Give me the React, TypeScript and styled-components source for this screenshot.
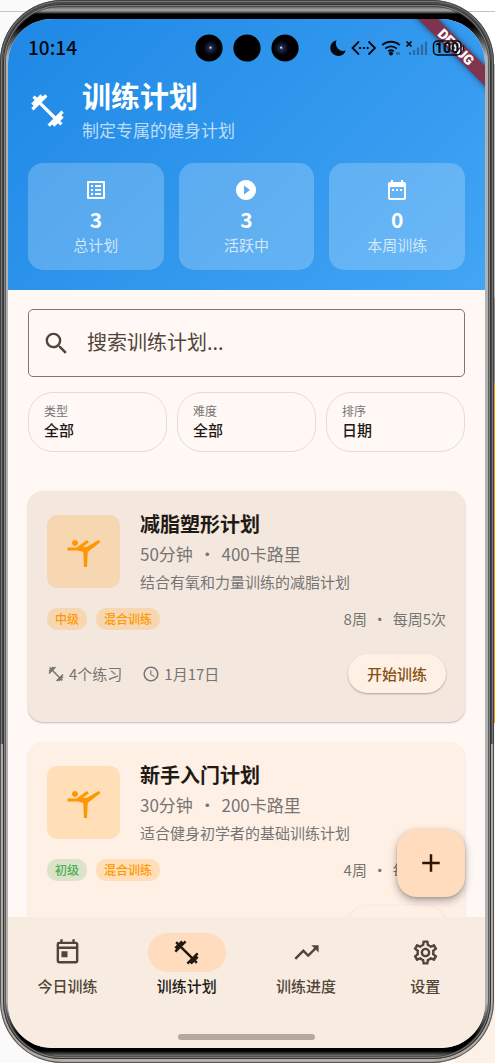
import React from 'react';
import styled, { createGlobalStyle, css } from 'styled-components';
import {
  MdAdd,
  MdDateRange,
  MdFitnessCenter,
  MdListAlt,
  MdOutlineSettings,
  MdOutlineToday,
  MdPlayCircleFilled,
  MdSchedule,
  MdSearch,
  MdSportsGymnastics,
  MdTrendingUp,
} from 'react-icons/md';

const GlobalStyle = createGlobalStyle`
  *, *::before, *::after { box-sizing: border-box; }
  body {
    margin: 0;
    font-family: "Noto Sans CJK SC", "Noto Sans", sans-serif;
    color: #211a14;
    background: #f7f6f6;
  }
  button, input, select { font: inherit; color: inherit; }
  h1, h2, p, ul { margin: 0; padding: 0; }
`;

/* ---------- device ---------- */

const Desk = styled.div`
  height: 100vh;
  min-height: 800px;
  padding-right: 1px;
  background:
    linear-gradient(#c4c4c4, #c4c4c4) 0 11px / 100% 1px no-repeat,
    linear-gradient(#fff 0 6%, #b9b9b9 6% 28%, #8d8d8d 28% 36%, #f59a0c 36% 68%, #f4f4f4 68% 94%, #fdf0e9 94%) right / 40px 100% no-repeat,
    #fbfafa;
`;

const Phone = styled.div`
  height: 100%;
  padding: 4px 3px;
  border-radius: 62px;
  background: linear-gradient(#4a4a4a 0 70%, #b7afa4 70%);
  box-shadow: inset 0 0 0 1px rgba(30, 30, 30, 0.6), inset 0 0 0 2px rgba(160, 160, 160, 0.5);
`;

const Bezel = styled.div`
  height: 100%;
  padding: 15px 6px 11px 5px;
  border-radius: 58px;
  background: linear-gradient(
    #2a2a2a 0,
    #a9a5a5 6px,
    #6a6868 8px,
    #000 10px,
    #000 22px,
    #b2b2b2 52px,
    #b2b2b2 calc(100% - 56px),
    #000 calc(100% - 24px),
    #000 calc(100% - 8px),
    #8a8a8a calc(100% - 2px),
    #55504b 100%
  );
  box-shadow: inset 0 0 0 1px #333, inset 0 0 0 2px rgba(140, 140, 140, 0.8), inset 0 0 0 3px rgba(60, 60, 60, 0.7);
`;

const Screen = styled.div`
  position: relative;
  display: flex;
  flex-direction: column;
  height: 100%;
  overflow: hidden;
  border-radius: 44px;
  background: #fff8f5;
`;

const DebugRibbon = styled.div`
  position: absolute;
  top: 21px;
  right: -31px;
  width: 120px;
  height: 14px;
  transform: rotate(45deg);
  background: rgba(142, 32, 46, 0.84);
  box-shadow: 0 0 6px rgba(0, 0, 0, 0.5);
  color: #fff;
  font: 900 14px/14px Roboto, sans-serif;
  text-align: center;
`;

/* ---------- header ---------- */

const Header = styled.header`
  flex: none;
  padding: 0 20px 20px;
  background: linear-gradient(135deg, #1e88e5, #42a5f5);
  color: #fff;
`;

const StatusBar = styled.div`
  display: grid;
  grid-template-columns: 1fr auto 1fr;
  align-items: center;
  height: 58px;
  color: #05080c;
`;

const Clock = styled.time`
  padding-bottom: 2px;
  font-size: 19px;
  line-height: 24px;
  font-weight: 500;
`;

const StatusIcons = styled.svg`
  position: relative;
  z-index: 1;
  justify-self: end;
  display: block;
`;

const TitleRow = styled.div`
  display: flex;
  align-items: center;
  gap: 15px;
  margin-bottom: 19px;
`;

const Title = styled.h1`
  margin-bottom: 3px;
  font-size: 29px;
  line-height: 36px;
  font-weight: 700;
`;

const Subtitle = styled.p`
  font-size: 17px;
  line-height: 28px;
  color: rgba(255, 255, 255, 0.7);
`;

const Stats = styled.div`
  display: grid;
  grid-template-columns: repeat(3, 1fr);
  gap: 15px;
`;

const Stat = styled.div`
  display: flex;
  flex-direction: column;
  align-items: center;
  padding: 15px 8px 14px;
  border-radius: 15px;
  background: rgba(255, 255, 255, 0.22);
`;

const StatValue = styled.strong`
  margin-top: 3px;
  font-size: 21px;
  line-height: 29px;
`;

const StatLabel = styled.span`
  font-size: 15px;
  line-height: 22px;
  color: rgba(255, 255, 255, 0.72);
`;

/* ---------- content ---------- */

const Body = styled.main`
  position: relative;
  flex: 1;
  min-height: 0;
`;

const Scroller = styled.div`
  height: 100%;
  overflow-y: auto;
  scrollbar-width: none;
  padding: 19px 20px 20px;
`;

const SearchBox = styled.label`
  display: flex;
  align-items: center;
  gap: 16px;
  height: 68px;
  padding: 0 13px;
  border: 1px solid #84756a;
  border-radius: 5px;
  color: #51453a;
`;

const SearchInput = styled.input`
  flex: 1;
  min-width: 0;
  padding: 0 0 2px;
  border: 0;
  outline: 0;
  background: none;
  font-size: 20px;
  line-height: 30px;
  &::placeholder { color: #51453a; opacity: 1; }
`;

const Filters = styled.div`
  display: grid;
  grid-template-columns: repeat(3, 1fr);
  gap: 10px;
  margin: 15px 0 39px;
`;

const Filter = styled.label`
  display: flex;
  flex-direction: column;
  height: 60px;
  padding: 9px 15px;
  border: 1px solid #dedede;
  border-radius: 25px;
`;

const FilterName = styled.span`
  font-size: 12px;
  line-height: 18px;
  color: #757575;
`;

const FilterSelect = styled.select`
  appearance: none;
  padding: 0;
  border: 0;
  outline: 0;
  background: none;
  font-size: 15px;
  line-height: 20px;
  font-weight: 500;
`;

const CardList = styled.div`
  display: flex;
  flex-direction: column;
  gap: 20px;
`;

const Card = styled.article<{ $active?: boolean }>`
  padding: 18px 19px 29px;
  border-radius: 15px;
  background: ${(p) => (p.$active ? '#f4e8de' : '#fff0e6')};
  box-shadow: 0 1px 2px rgba(0, 0, 0, ${(p) => (p.$active ? 0.26 : 0.14)});
`;

const CardTop = styled.div`
  display: flex;
  align-items: center;
  gap: 20px;
`;

const Tile = styled.div`
  display: grid;
  place-items: center;
  flex: none;
  width: 73px;
  height: 73px;
  border-radius: 10px;
  background: rgba(255, 152, 0, 0.2);
  color: #ff9800;
`;

const CardTitle = styled.h2`
  font-size: 20px;
  line-height: 29px;
  font-weight: 700;
`;

const CardMeta = styled.p`
  font-size: 17px;
  line-height: 32px;
  color: #757575;
`;

const Dot = styled.span`
  margin: 0 2px;
`;

const CardText = styled.p`
  font-size: 15px;
  line-height: 24px;
  color: #757575;
`;

const TagRow = styled.div`
  display: flex;
  align-items: center;
  gap: 9px;
  height: 22px;
  margin: 14px 0 24px;
`;

const tones = {
  orange: css`background: rgba(255, 152, 0, 0.2); color: #ff9800;`,
  green: css`background: rgba(76, 175, 80, 0.2); color: #4caf50;`,
};

const Tag = styled.span<{ $tone: keyof typeof tones }>`
  padding: 0 8px;
  border-radius: 10px;
  font-size: 12px;
  line-height: 22px;
  font-weight: 500;
  ${(p) => tones[p.$tone]}
`;

const Schedule = styled.span`
  margin-left: auto;
  font-size: 15px;
  line-height: 22px;
  color: #757575;
`;

const CardFooter = styled.div`
  display: flex;
  align-items: center;
  gap: 20px;
`;

const Fact = styled.span`
  display: flex;
  align-items: center;
  gap: 4px;
  font-size: 15px;
  line-height: 22px;
  color: #757575;
`;

const StartButton = styled.button`
  height: 39px;
  margin-left: auto;
  padding: 0 19px;
  border: 0;
  border-radius: 20px;
  background: #fff0e6;
  box-shadow: 0 1px 2px rgba(0, 0, 0, 0.3);
  font-size: 15px;
  font-weight: 500;
  color: #86510f;
`;

const AddButton = styled.button`
  position: absolute;
  right: 20px;
  bottom: 20px;
  display: grid;
  place-items: center;
  width: 68px;
  height: 68px;
  padding: 0;
  border: 0;
  border-radius: 20px;
  background: #ffdcbe;
  box-shadow: 0 4px 8px rgba(0, 0, 0, 0.3), 0 1px 3px rgba(0, 0, 0, 0.15);
  color: #2c1600;
`;

/* ---------- bottom navigation ---------- */

const BottomBar = styled.footer`
  flex: none;
  display: flex;
  flex-direction: column;
  align-items: center;
  padding: 16px 0 8px;
  background: #f8ebe0;
`;

const Nav = styled.nav`
  display: grid;
  grid-template-columns: repeat(4, 1fr);
  width: 100%;
  margin-bottom: 37px;
`;

const NavItem = styled.a<{ $active?: boolean }>`
  display: flex;
  flex-direction: column;
  align-items: center;
  gap: 2px;
  font-size: 15px;
  line-height: 23px;
  font-weight: 500;
  text-decoration: none;
  color: ${(p) => (p.$active ? '#211a14' : '#51453a')};
`;

const NavPill = styled.span<{ $active?: boolean }>`
  display: grid;
  place-items: center;
  width: 78px;
  height: 39px;
  border-radius: 20px;
  background: ${(p) => (p.$active ? '#ffdcbe' : 'transparent')};
`;

const HomeIndicator = styled.div`
  width: 137px;
  height: 6px;
  border-radius: 3px;
  background: #b5a89c;
`;

/* ---------- data ---------- */

const stats = [
  { icon: MdListAlt, value: 3, label: '总计划' },
  { icon: MdPlayCircleFilled, value: 3, label: '活跃中' },
  { icon: MdDateRange, value: 0, label: '本周训练' },
];

const filters = [
  { name: '类型', value: '全部' },
  { name: '难度', value: '全部' },
  { name: '排序', value: '日期' },
];

interface Plan {
  title: string;
  duration: string;
  energy: string;
  text: string;
  level: string;
  tone: keyof typeof tones;
  weeks: string;
  frequency: string;
  exercises: string;
  date: string;
  active?: boolean;
}

const plans: Plan[] = [
  {
    title: '减脂塑形计划',
    duration: '50分钟',
    energy: '400卡路里',
    text: '结合有氧和力量训练的减脂计划',
    level: '中级',
    tone: 'orange',
    weeks: '8周',
    frequency: '每周5次',
    exercises: '4个练习',
    date: '1月17日',
    active: true,
  },
  {
    title: '新手入门计划',
    duration: '30分钟',
    energy: '200卡路里',
    text: '适合健身初学者的基础训练计划',
    level: '初级',
    tone: 'green',
    weeks: '4周',
    frequency: '每周3次',
    exercises: '4个练习',
    date: '1月17日',
  },
];

const navItems = [
  { icon: MdOutlineToday, label: '今日训练' },
  { icon: MdFitnessCenter, label: '训练计划', active: true },
  { icon: MdTrendingUp, label: '训练进度' },
  { icon: MdOutlineSettings, label: '设置' },
];

/* ---------- parts ---------- */

const Cameras = () => (
  <svg width="104" height="28" viewBox="0 0 104 28" aria-hidden="true">
    <defs>
      <radialGradient id="lens">
        <stop offset="0" stopColor="#6f9be0" />
        <stop offset="0.25" stopColor="#1c2c55" />
        <stop offset="0.7" stopColor="#10131f" />
        <stop offset="1" stopColor="#050507" />
      </radialGradient>
    </defs>
    <circle cx="14" cy="14" r="13.6" />
    <circle cx="52" cy="14" r="13.6" />
    <circle cx="90" cy="14" r="13.6" />
    <circle cx="15.500" cy="14" r="7" fill="url(#lens)" />
    <circle cx="15.500" cy="13.500" r="1" fill="#cfe0ff" />
    <circle cx="86.500" cy="14" r="7" fill="url(#lens)" />
    <circle cx="86" cy="13.500" r="1" fill="#cfe0ff" />
  </svg>
);

const SystemIcons = () => (
  <StatusIcons width="136" height="20" viewBox="0 0 136 20" fill="none" stroke="#05080c" aria-hidden="true">
    <path d="M7.600 2.200a8 8 0 1 0 9.300 10.400A7.600 7.600 0 0 1 7.600 2.200z" fill="#05080c" stroke="none" />
    <path d="M30 3.500L23.500 10l6.500 6.500M39.500 3.500L46 10l-6.500 6.500" strokeWidth="1.800" />
    <path d="M30 10h2M33.800 10h2M37.600 10h2" strokeWidth="1.900" />
    <path d="M53.200 7.200a13 13 0 0 1 17.600 0M56.200 10.600a8.500 8.500 0 0 1 11.600 0M59.200 13.400a4.500 4.500 0 0 1 5.600 0" strokeWidth="1.800" />
    <circle cx="62" cy="15.500" r="2" fill="#05080c" stroke="none" />
    <path d="M67 15.500h4" strokeOpacity="0.3" strokeWidth="2.400" />
    <path d="M77.500 3.500l5 5M82.500 3.500l-5 5" strokeWidth="1.700" />
    <path d="M81 17v-3M85 17v-5M89 17V9.500M93 17V6.500M97 17V3.500" stroke="#2a4a6b" strokeOpacity="0.6" strokeWidth="2.200" />
    <rect x="104.500" y="3" width="27.500" height="14" rx="4" strokeWidth="1.500" />
    <path d="M134.500 7.500v5" strokeWidth="1.500" />
    <text x="118" y="15" textAnchor="middle" fill="#05080c" stroke="none" fontFamily="Roboto, sans-serif" fontWeight="800" fontSize="14">
      100
    </text>
  </StatusIcons>
);

const PlanCard = ({ plan }: { plan: Plan }) => (
  <Card $active={plan.active}>
    <CardTop>
      <Tile>
        <MdSportsGymnastics size={36} />
      </Tile>
      <div>
        <CardTitle>{plan.title}</CardTitle>
        <CardMeta>
          {plan.duration} <Dot>•</Dot> {plan.energy}
        </CardMeta>
        <CardText>{plan.text}</CardText>
      </div>
    </CardTop>
    <TagRow>
      <Tag $tone={plan.tone}>{plan.level}</Tag>
      <Tag $tone="orange">混合训练</Tag>
      <Schedule>
        {plan.weeks} <Dot>•</Dot> {plan.frequency}
      </Schedule>
    </TagRow>
    <CardFooter>
      <Fact>
        <MdFitnessCenter size={18} />
        {plan.exercises}
      </Fact>
      <Fact>
        <MdSchedule size={18} />
        {plan.date}
      </Fact>
      <StartButton type="button">开始训练</StartButton>
    </CardFooter>
  </Card>
);

export default function App() {
  return (
    <>
      <GlobalStyle />
      <Desk>
        <Phone>
          <Bezel>
            <Screen>
              <Header>
                <StatusBar>
                  <Clock>10:14</Clock>
                  <Cameras />
                  <SystemIcons />
                </StatusBar>
                <TitleRow>
                  <MdFitnessCenter size={39} />
                  <div>
                    <Title>训练计划</Title>
                    <Subtitle>制定专属的健身计划</Subtitle>
                  </div>
                </TitleRow>
                <Stats>
                  {stats.map(({ icon: Icon, value, label }) => (
                    <Stat key={label}>
                      <Icon size={24} />
                      <StatValue>{value}</StatValue>
                      <StatLabel>{label}</StatLabel>
                    </Stat>
                  ))}
                </Stats>
              </Header>

              <Body>
                <Scroller>
                  <SearchBox>
                    <MdSearch size={29} />
                    <SearchInput type="text" placeholder="搜索训练计划..." aria-label="搜索训练计划" />
                  </SearchBox>
                  <Filters>
                    {filters.map((f) => (
                      <Filter key={f.name}>
                        <FilterName>{f.name}</FilterName>
                        <FilterSelect defaultValue={f.value}>
                          <option>{f.value}</option>
                        </FilterSelect>
                      </Filter>
                    ))}
                  </Filters>
                  <CardList>
                    {plans.map((plan) => (
                      <PlanCard key={plan.title} plan={plan} />
                    ))}
                  </CardList>
                </Scroller>
                <AddButton type="button" aria-label="新建计划">
                  <MdAdd size={30} />
                </AddButton>
              </Body>

              <BottomBar>
                <Nav>
                  {navItems.map(({ icon: Icon, label, active }) => (
                    <NavItem key={label} href="#" $active={active} aria-current={active ? 'page' : undefined}>
                      <NavPill $active={active}>
                        <Icon size={29} />
                      </NavPill>
                      {label}
                    </NavItem>
                  ))}
                </Nav>
                <HomeIndicator />
              </BottomBar>
              <DebugRibbon>DEBUG</DebugRibbon>
            </Screen>
          </Bezel>
        </Phone>
      </Desk>
    </>
  );
}
